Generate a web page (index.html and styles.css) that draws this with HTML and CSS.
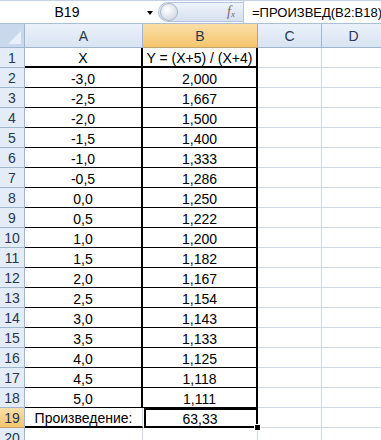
FILE: index.html
```html
<!DOCTYPE html>
<html>
<head>
<meta charset="utf-8">
<link rel="stylesheet" href="styles.css">
</head>
<body>
<div class="app">
  <div class="fbar">
    <div class="namebox"><span class="name">B19</span></div>
    <div class="dd"><span class="arrow"></span></div>
    <div class="capsule">
      <span class="knob"></span>
      <span class="fx">f<sub>x</sub></span>
    </div>
    <div class="formula">=ПРОИЗВЕД(B2:B18)</div>
  </div>
  <div class="sheet">
    <div class="corner"></div>
    <div class="ch">A</div>
    <div class="ch sel">B</div>
    <div class="ch">C</div>
    <div class="ch">D</div>

    <div class="rh">1</div><div class="c a r1">X</div><div class="c b r1">Y = (X+5) / (X+4)</div><div class="c"></div><div class="c"></div>
    <div class="rh">2</div><div class="c a">-3,0</div><div class="c b">2,000</div><div class="c"></div><div class="c"></div>
    <div class="rh">3</div><div class="c a">-2,5</div><div class="c b">1,667</div><div class="c"></div><div class="c"></div>
    <div class="rh">4</div><div class="c a">-2,0</div><div class="c b">1,500</div><div class="c"></div><div class="c"></div>
    <div class="rh">5</div><div class="c a">-1,5</div><div class="c b">1,400</div><div class="c"></div><div class="c"></div>
    <div class="rh">6</div><div class="c a">-1,0</div><div class="c b">1,333</div><div class="c"></div><div class="c"></div>
    <div class="rh">7</div><div class="c a">-0,5</div><div class="c b">1,286</div><div class="c"></div><div class="c"></div>
    <div class="rh">8</div><div class="c a">0,0</div><div class="c b">1,250</div><div class="c"></div><div class="c"></div>
    <div class="rh">9</div><div class="c a">0,5</div><div class="c b">1,222</div><div class="c"></div><div class="c"></div>
    <div class="rh">10</div><div class="c a">1,0</div><div class="c b">1,200</div><div class="c"></div><div class="c"></div>
    <div class="rh">11</div><div class="c a">1,5</div><div class="c b">1,182</div><div class="c"></div><div class="c"></div>
    <div class="rh">12</div><div class="c a">2,0</div><div class="c b">1,167</div><div class="c"></div><div class="c"></div>
    <div class="rh">13</div><div class="c a">2,5</div><div class="c b">1,154</div><div class="c"></div><div class="c"></div>
    <div class="rh">14</div><div class="c a">3,0</div><div class="c b">1,143</div><div class="c"></div><div class="c"></div>
    <div class="rh">15</div><div class="c a">3,5</div><div class="c b">1,133</div><div class="c"></div><div class="c"></div>
    <div class="rh">16</div><div class="c a">4,0</div><div class="c b">1,125</div><div class="c"></div><div class="c"></div>
    <div class="rh">17</div><div class="c a">4,5</div><div class="c b">1,118</div><div class="c"></div><div class="c"></div>
    <div class="rh">18</div><div class="c a">5,0</div><div class="c b">1,111</div><div class="c"></div><div class="c"></div>
    <div class="rh sel">19</div><div class="c a19">Произведение:</div><div class="c active">63,33<span class="handle"></span></div><div class="c"></div><div class="c"></div>
    <div class="rh">20</div><div class="c"></div><div class="c"></div><div class="c"></div><div class="c"></div>
  </div>
</div>
</body>
</html>
```
FILE: styles.css
```css
html, body {
  margin: 0;
  padding: 0;
  background: #fff;
  overflow: hidden;
}
body {
  width: 381px;
  height: 440px;
  font-family: "Liberation Sans", Arial, sans-serif;
}
.app {
  width: 386px;
}
.fbar {
  height: 24px;
  display: flex;
  box-sizing: border-box;
  border-top: 1px solid #c3d3e8;
  border-bottom: 1px solid #a9bfd6;
  background: #fff;
}
.namebox {
  width: 143px;
  display: flex;
  align-items: center;
  justify-content: center;
  padding-right: 9px;
  box-sizing: border-box;
}
.name {
  font-size: 14px;
  color: #000;
}
.dd {
  width: 14px;
  display: flex;
  align-items: center;
  justify-content: center;
}
.arrow {
  width: 0;
  height: 0;
  border-left: 3.5px solid transparent;
  border-right: 3.5px solid transparent;
  border-top: 4px solid #000;
  margin-top: 1px;
}
.capsule {
  width: 85px;
  margin: 1px 0 1px 1px;
  border-radius: 11px 0 0 11px;
  background: linear-gradient(#eef3fa, #d6e1ef);
  border: 1px solid #b3c6dd;
  border-right: none;
  display: flex;
  align-items: center;
  position: relative;
  box-sizing: border-box;
}
.knob {
  width: 18px;
  height: 18px;
  border-radius: 50%;
  margin-left: 1px;
  background: radial-gradient(circle at 40% 35%, #ffffff 0%, #e9edf2 40%, #c6ced8 100%);
  border: 1px solid #a9b6c6;
  box-sizing: border-box;
}
.fx {
  margin-left: auto;
  margin-right: 8px;
  font-family: "Liberation Serif", serif;
  font-style: italic;
  font-size: 14px;
  color: #6d6d6d;
}
.fx sub {
  font-size: 9px;
  vertical-align: -1px;
}
.formula {
  flex: 1;
  display: flex;
  align-items: center;
  padding-left: 8px;
  font-size: 13px;
  color: #000;
  border-left: 1px solid #b3c6dd;
  white-space: nowrap;
}
.sheet {
  display: grid;
  grid-template-columns: 25px 118px 115px 64px 64px;
  grid-template-rows: 24px repeat(20, 20px);
}
.corner {
  background: #c9d8ec;
  border-right: 1px solid #9eb6ce;
  border-bottom: 1px solid #9eb6ce;
  box-sizing: border-box;
  position: relative;
}
.corner::after {
  content: "";
  position: absolute;
  right: 3px;
  bottom: 3px;
  width: 13px;
  height: 13px;
  background: #e9f0f9;
  clip-path: polygon(100% 0, 100% 100%, 0 100%);
}
.ch {
  background: linear-gradient(#eaf1fa, #d9e4f2);
  border-right: 1px solid #9eb6ce;
  border-bottom: 1px solid #9eb6ce;
  box-sizing: border-box;
  display: flex;
  align-items: center;
  justify-content: center;
  font-size: 14px;
  color: #27384f;
  padding-top: 1px;
}
.ch.sel {
  background: linear-gradient(#fbdfa8, #f4c56d);
  border-right-color: #c2a36b;
  border-bottom-color: #c2a36b;
}
.rh {
  background: #e4ecf7;
  border-right: 1px solid #9eb6ce;
  border-bottom: 1px solid #9eb6ce;
  box-sizing: border-box;
  display: flex;
  align-items: center;
  justify-content: center;
  font-size: 14px;
  color: #27384f;
}
.rh.sel {
  background: linear-gradient(#fbdfa8, #f4c56d);
  border-bottom-color: #c2a36b;
}
.c {
  border-right: 1px solid #d0d7e5;
  border-bottom: 1px solid #d0d7e5;
  box-sizing: border-box;
  display: flex;
  align-items: center;
  justify-content: center;
  font-size: 14px;
  color: #000;
  white-space: nowrap;
  padding-top: 2px;
}
.c.a, .c.b {
  border-right: 2px solid #000;
  border-bottom: 1px solid #000;
}
.c.r1 {
  border-bottom: 2px solid #000;
}
.c.a19 {
  border-bottom: 2px solid #000;
}
.c.active {
  position: relative;
}
.c.active::before {
  content: "";
  position: absolute;
  left: 1px;
  top: 0;
  right: -1px;
  bottom: -1px;
  border: 2px solid #000;
  box-sizing: border-box;
}
.handle {
  position: absolute;
  right: -4px;
  bottom: -4px;
  width: 5px;
  height: 5px;
  background: #000;
  border: 1px solid #fff;
  z-index: 2;
}
```
